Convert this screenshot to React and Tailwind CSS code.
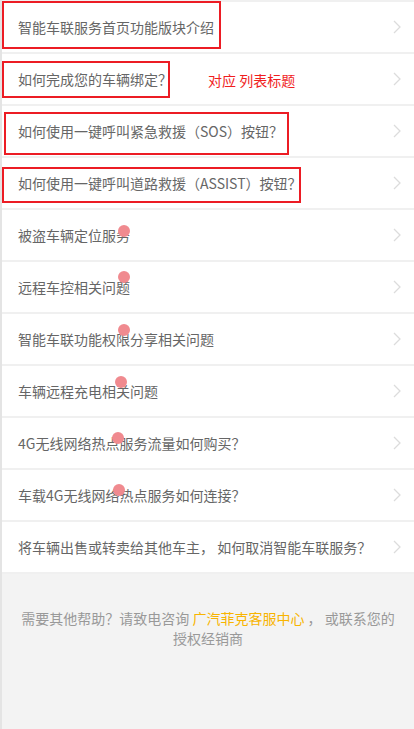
import React from 'react';

const items = [
  { title: '智能车联服务首页功能版块介绍' },
  { title: '如何完成您的车辆绑定？' },
  { title: '如何使用一键呼叫紧急救援（SOS）按钮？' },
  { title: '如何使用一键呼叫道路救援（ASSIST）按钮？' },
  { title: '被盗车辆定位服务', dot: 'left-[116px] top-[15px]' },
  { title: '远程车控相关问题', dot: 'left-[116px] top-[9px]' },
  { title: '智能车联功能权限分享相关问题', dot: 'left-[116px] top-[10px]' },
  { title: '车辆远程充电相关问题', dot: 'left-[113px] top-[10px]' },
  { title: '4G无线网络热点服务流量如何购买？', dot: 'left-[110px] top-[14px]' },
  { title: '车载4G无线网络热点服务如何连接？', dot: 'left-[111px] top-[14px]' },
  { title: '将车辆出售或转卖给其他车主， 如何取消智能车联服务？' },
];

const Chevron = () => (
  <svg width="8" height="14" viewBox="0 0 8 14" fill="none" className="shrink-0">
    <polyline points="1,1 7,7 1,13" stroke="#dcdcdc" strokeWidth="1.3" />
  </svg>
);

const App = () => {
  return (
    <div
      className="relative min-h-screen bg-[#f3f3f3] border-l-2 border-[#e4e4e4]"
      style={{ fontFamily: '"Noto Sans CJK SC", "Noto Sans", sans-serif' }}
    >
      <ul className="border-t-2 border-[#f0f0f0]">
        {items.map((item) => (
          <li
            key={item.title}
            className="relative flex h-[50px] items-center justify-between bg-white pl-4 pr-[13px] text-[14px] text-[#666] box-content border-b-2 border-[#f0f0f0]"
          >
            <span className="whitespace-nowrap">{item.title}</span>
            <Chevron />
            {item.dot && (
              <span className={`absolute h-3 w-3 rounded-full bg-[#f08a8f] ${item.dot}`} />
            )}
          </li>
        ))}
      </ul>

      <p className="px-4 pt-[34px] text-center text-[14px] leading-5 text-[#999]">
        需要其他帮助？请致电咨询 <span className="text-[#f8b400]">广汽菲克客服中心</span> ， 或联系您的授权经销商
      </p>

      {/* annotation overlays */}
      <div className="absolute left-0 top-[1px] h-[48px] w-[219px] border-2 border-[#ec1c24]" />
      <div className="absolute left-0 top-[61px] h-[37px] w-[168px] border-2 border-[#ec1c24]" />
      <span className="absolute left-[206px] top-[70px] text-[14px] leading-5 text-[#f01e1e]">对应 列表标题</span>
      <div className="absolute left-[2px] top-[112px] h-[43px] w-[285px] border-2 border-[#ec1c24]" />
      <div className="absolute left-0 top-[167px] h-[36px] w-[299px] border-2 border-[#ec1c24]" />
    </div>
  );
};

export default App;
